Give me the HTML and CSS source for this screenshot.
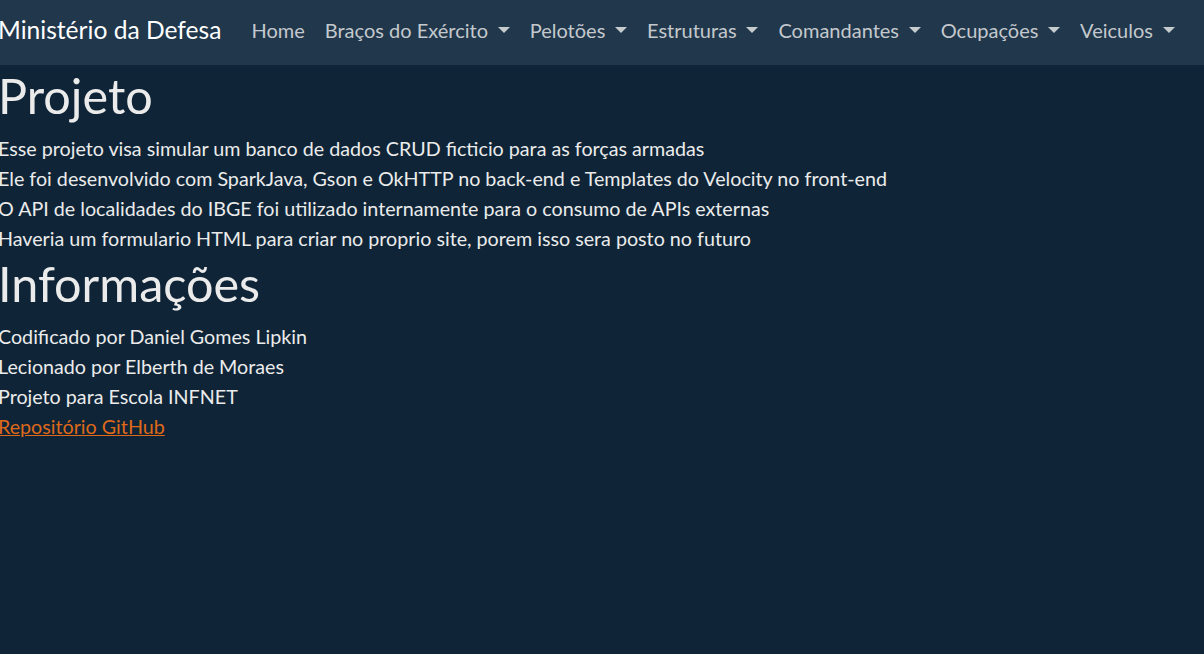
FILE: index.html
```html
<!DOCTYPE html>
<html lang="pt-BR">
<head>
<meta charset="utf-8">
<title>Ministério da Defesa</title>
<link rel="stylesheet" href="styles.css">
</head>
<body>
<nav class="navbar">
  <a class="brand" href="#">Ministério da Defesa</a>
  <ul class="nav">
    <li><a class="nav-link" href="#">Home</a></li>
    <li><a class="nav-link toggle" href="#">Braços do Exército </a></li>
    <li><a class="nav-link toggle" href="#">Pelotões </a></li>
    <li><a class="nav-link toggle" href="#">Estruturas </a></li>
    <li><a class="nav-link toggle" href="#">Comandantes </a></li>
    <li><a class="nav-link toggle" href="#">Ocupações </a></li>
    <li><a class="nav-link toggle" href="#">Veiculos </a></li>
  </ul>
</nav>
<main class="content">
  <h1 class="title">Projeto</h1>
  <p class="lines">Esse projeto visa simular um banco de dados CRUD ficticio para as forças armadas<br>Ele foi desenvolvido com SparkJava, Gson e OkHTTP no back-end e Templates do Velocity no front-end<br>O API de localidades do IBGE foi utilizado internamente para o consumo de APIs externas<br>Haveria um formulario HTML para criar no proprio site, porem isso sera posto no futuro</p>
  <h1 class="title">Informações</h1>
  <p class="lines">Codificado por Daniel Gomes Lipkin<br>Lecionado por Elberth de Moraes<br>Projeto para Escola INFNET<br><a class="link" href="#">Repositório GitHub</a></p>
</main>
</body>
</html>
```
FILE: styles.css
```css
* { box-sizing: border-box; }
html, body { margin: 0; padding: 0; }
body {
  background: #0f2537;
  color: #ebebeb;
  font-family: Lato, "Noto Sans", sans-serif;
  font-size: 19.7px;
  line-height: 30px;
  min-height: 654px;
}
.navbar {
  display: flex;
  align-items: center;
  height: 65px;
  padding-bottom: 5px;
  background: #20374c;
}
.brand {
  color: #ffffff;
  text-decoration: none;
  font-size: 24.6px;
  line-height: 1.5;
  margin-left: -2px;
  margin-right: 20px;
  white-space: nowrap;
}
.nav {
  display: flex;
  list-style: none;
  margin: 0;
  padding: 0;
}
.nav-link {
  display: block;
  padding: 0 10px;
  font-size: 20px;
  line-height: 30px;
  color: rgba(235, 235, 235, 0.82);
  text-decoration: none;
  white-space: pre;
}
.toggle::after {
  content: "";
  display: inline-block;
  margin-left: 4.6px;
  vertical-align: 0.255em;
  border-top: 0.3em solid;
  border-right: 0.3em solid transparent;
  border-left: 0.3em solid transparent;
  border-bottom: 0;
}
.content { margin-left: -2px; padding-top: 1px; }
.title {
  font-size: 48.5px;
  font-weight: 400;
  line-height: 1.2;
  margin: 0 0 10px;
}
.lines { margin: 0; }
.link { color: #df6919; }
```
